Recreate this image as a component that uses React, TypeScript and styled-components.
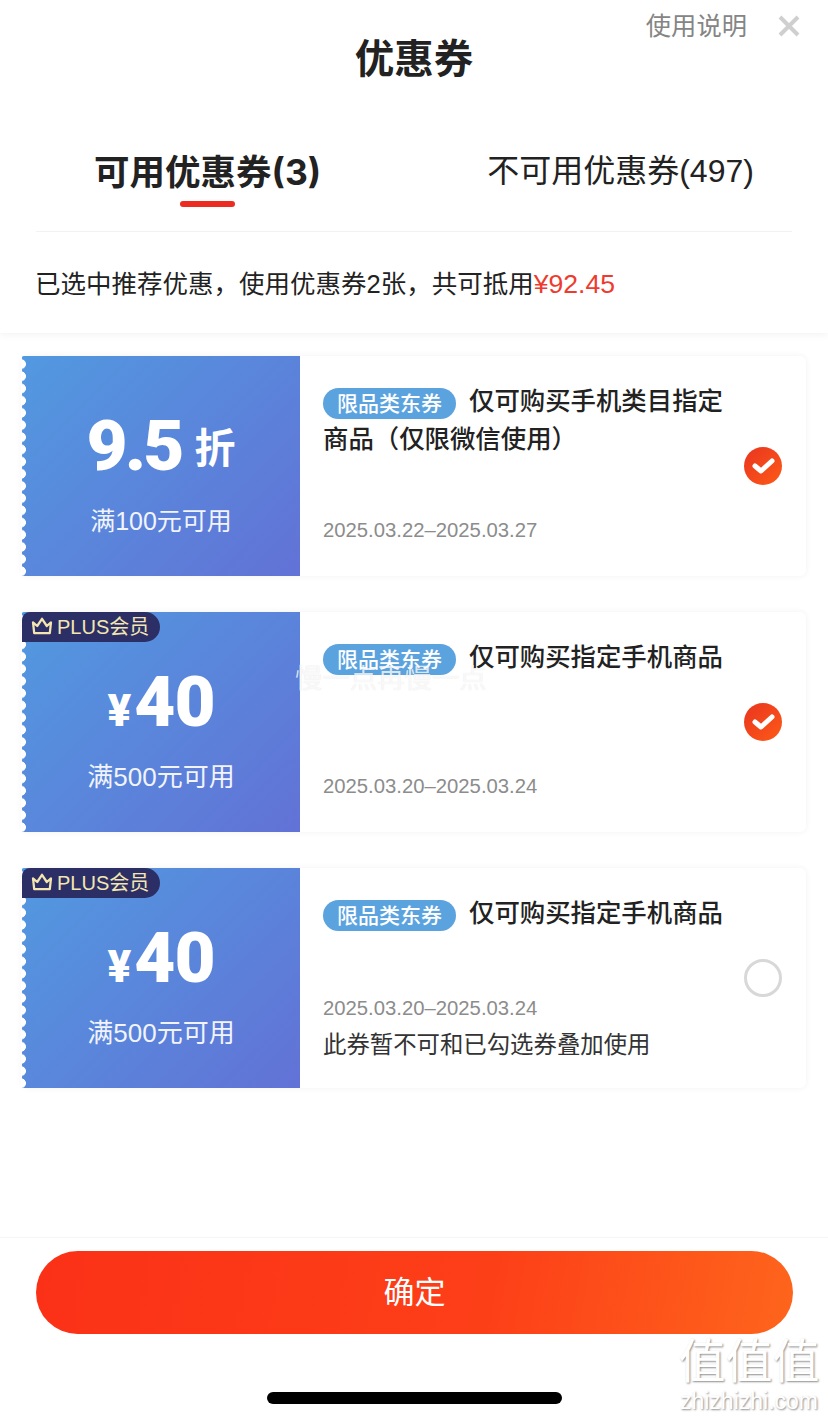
import React from "react";
import styled, { createGlobalStyle } from "styled-components";

const GlobalStyle = createGlobalStyle`
  html, body {
    margin: 0;
    padding: 0;
    background: #fff;
    font-family: "Liberation Sans", "Noto Sans CJK SC", sans-serif;
  }
  * { box-sizing: border-box; }
`;

const Page = styled.div`
  position: relative;
  width: 828px;
  height: 1420px;
  overflow: hidden;
  display: flex;
  flex-direction: column;
  background: #fff;
  color: #1d1d1f;
`;

const Head = styled.header`
  height: 333px;
  padding: 0 36px;
  flex-shrink: 0;
  background: #fff;
  box-shadow: 0 2px 8px rgba(0, 0, 0, 0.05);
`;

const TitleRow = styled.div`
  display: grid;
  grid-template-columns: 1fr auto 1fr;
  height: 134px;
`;

const Title = styled.h1`
  grid-column: 2;
  margin: 32px 0 0;
  font-size: 39.5px;
  line-height: 54px;
  font-weight: 700;
  color: #222;
`;

const Actions = styled.div`
  grid-column: 3;
  display: flex;
  justify-content: flex-end;
  align-items: center;
  gap: 31px;
  height: 26px;
  margin-top: 13px;
  margin-right: -8px;
`;

const Help = styled.span`
  font-size: 25.3px;
  line-height: 26px;
  color: #858585;
`;

const Tabs = styled.div`
  display: flex;
  align-items: flex-start;
  height: 98px;
  border-bottom: 1px solid #f2f2f2;
`;

const Tab = styled.div<{ $active?: boolean; $left: number }>`
  display: flex;
  flex-direction: column;
  align-items: center;
  margin-left: ${(p) => p.$left}px;
  font-family: ${(p) => (p.$active ? '"Inter", "Noto Sans CJK SC", sans-serif' : "inherit")};
  font-size: ${(p) => (p.$active ? 35.5 : 32)}px;
  font-weight: ${(p) => (p.$active ? 700 : 400)};
  line-height: ${(p) => (p.$active ? 50 : 44)}px;
  margin-top: ${(p) => (p.$active ? 14 : 15)}px;
  color: #222;
  white-space: nowrap;
`;

const TabLine = styled.div`
  width: 55px;
  height: 6px;
  margin-top: 3px;
  border-radius: 3px;
  background: #ec2c20;
`;

const Summary = styled.p`
  margin: 0 0 0 -1px;
  padding-top: 34px;
  font-size: 25.5px;
  line-height: 36px;
  color: #222;
  white-space: nowrap;
`;

const Red = styled.span`
  font-size: 26.6px;
  color: #ee3b2e;
`;

const List = styled.main`
  flex: 1;
  display: flex;
  flex-direction: column;
  gap: 36px;
  padding: 23px 22px 0;
`;

const Card = styled.section`
  display: flex;
  width: 784px;
  height: 220px;
  background: #fff;
  border-radius: 6px;
  box-shadow: 0 0 6px rgba(0, 0, 0, 0.06);
`;

const Stub = styled.div`
  position: relative;
  width: 278px;
  flex-shrink: 0;
  display: flex;
  flex-direction: column;
  align-items: center;
  color: #fff;
  background: linear-gradient(135deg, #5299e0 0%, #6272d6 100%);
  &::before {
    content: "";
    position: absolute;
    left: -1px;
    top: 0;
    bottom: 0;
    width: 6px;
    background: radial-gradient(circle at 0 50%, #fff 4.6px, transparent 5.2px) 0 2px / 6px 12.2px repeat-y;
  }
`;

const Badge = styled.div`
  position: absolute;
  left: 0;
  top: 0;
  z-index: 1;
  height: 30px;
  width: 138px;
  padding: 0 0 3px 9px;
  display: flex;
  align-items: center;
  gap: 4px;
  font-size: 20px;
  color: #f3e6b0;
  background: #2b2f66;
  border-radius: 8px 15px 15px 0;
  white-space: nowrap;
`;

const Value = styled.div`
  display: flex;
  align-items: baseline;
  margin-top: 52px;
  height: 76px;
  line-height: 76px;
`;

const Big = styled.span<{ $tight?: boolean }>`
  font-family: "Roboto", "Liberation Sans", sans-serif;
  font-size: 71px;
  font-weight: 900;
  letter-spacing: ${(p) => (p.$tight ? -3 : -1)}px;
`;

const Unit = styled.span`
  font-size: 41px;
  font-weight: 700;
  margin-left: 13px;
  position: relative;
  top: -7px;
`;

const Yen = styled.span`
  font-family: "Roboto", sans-serif;
  font-size: 44px;
  font-weight: 900;
  margin-right: 3px;
`;

const Cond = styled.div<{ $wide?: boolean }>`
  margin-top: 20px;
  font-size: ${(p) => (p.$wide ? 26 : 25)}px;
  line-height: 34px;
  color: #f1f4fc;
`;

const Body = styled.div`
  flex: 1;
  display: flex;
  align-items: center;
  padding: 0 24px 0 23px;
`;

const Info = styled.div`
  flex: 1;
  height: 100%;
  display: flex;
  flex-direction: column;
  padding-top: 26px;
`;

const Desc = styled.div`
  width: 412px;
  height: 84px;
  font-size: 25.4px;
  line-height: 38px;
  font-weight: 500;
  color: #222;
`;

const Tag = styled.span`
  display: inline-block;
  height: 31px;
  width: 133px;
  margin-right: 13px;
  border-radius: 16px;
  background: #5ba3df;
  color: #fff;
  font-size: 21px;
  line-height: 31px;
  font-weight: 500;
  text-align: center;
  vertical-align: -1px;
`;

const DateText = styled.div<{ $top: number }>`
  margin-top: ${(p) => p.$top}px;
  font-size: 20.3px;
  line-height: 28px;
  color: #8c8c8c;
`;

const Note = styled.div`
  margin-top: 6px;
  font-size: 23.4px;
  line-height: 34px;
  color: #333;
`;

const Check = styled.div<{ $on?: boolean }>`
  width: 38px;
  height: 38px;
  flex-shrink: 0;
  display: flex;
  align-items: center;
  justify-content: center;
  border-radius: 50%;
  background: ${(p) => (p.$on ? "linear-gradient(135deg, #e93420, #fd5a17)" : "#fff")};
  border: ${(p) => (p.$on ? "none" : "3px solid #d8d8d8")};
`;

const Foot = styled.footer`
  height: 183px;
  flex-shrink: 0;
  display: flex;
  flex-direction: column;
  align-items: center;
  padding-top: 13px;
  border-top: 1px solid #f5f5f5;
`;

const Confirm = styled.button`
  width: 757px;
  height: 83px;
  margin-left: 1px;
  padding: 0 0 6px;
  border: 0;
  border-radius: 42px;
  background: linear-gradient(100deg, #fb3117 0%, #fd3f18 60%, #fe651c 100%);
  color: #fff;
  font-family: inherit;
  font-size: 31px;
`;

const HomeBar = styled.div`
  width: 295px;
  height: 12px;
  margin-top: 58px;
  border-radius: 6px;
  background: #000;
`;

const Overlay = styled.div`
  position: absolute;
  left: 295px;
  top: 662px;
  font-size: 27.4px;
  line-height: 34px;
  color: rgba(255, 255, 255, 0.8);
  text-shadow: 0 0 1px rgba(0, 0, 0, 0.12);
  white-space: nowrap;
`;

const Mark = styled.div`
  position: absolute;
  right: 6px;
  top: 1335px;
  width: 146px;
  text-align: center;
  color: #fff;
  text-shadow: 1px 1px 2px rgba(0, 0, 0, 0.45);
`;

const MarkName = styled.div`
  font-size: 47px;
  line-height: 54px;
  white-space: nowrap;
`;

const MarkUrl = styled.div`
  font-size: 23px;
  line-height: 24px;
  white-space: nowrap;
`;

const Crown = () => (
  <svg width="22" height="18" viewBox="2 1 18 15" fill="none" stroke="#f3e6b0" strokeWidth="1.9" strokeLinejoin="round">
    <path d="M3.5 5.5 L7 8.5 L11 2.5 L15 8.5 L18.5 5.5 L17.5 14.5 H4.5 Z" />
  </svg>
);

const Tick = () => (
  <svg width="24" height="20" viewBox="0 0 24 20" fill="none" stroke="#fff" strokeWidth="5" strokeLinecap="round" strokeLinejoin="round">
    <path d="M4 10 L10 15 L21 5" />
  </svg>
);

const Close = () => (
  <svg width="22" height="22" viewBox="0 0 22 22" stroke="#cfcfcf" strokeWidth="4">
    <path d="M2 2 L20 20 M20 2 L2 20" />
  </svg>
);

type Coupon = {
  plus?: boolean;
  value: string;
  cond: string;
  desc: string;
  date: string;
  note?: string;
  on?: boolean;
};

const coupons: Coupon[] = [
  {
    value: "9.5",
    cond: "满100元可用",
    desc: "仅可购买手机类目指定商品（仅限微信使用）",
    date: "2025.03.22–2025.03.27",
    on: true,
  },
  {
    plus: true,
    value: "40",
    cond: "满500元可用",
    desc: "仅可购买指定手机商品",
    date: "2025.03.20–2025.03.24",
    on: true,
  },
  {
    plus: true,
    value: "40",
    cond: "满500元可用",
    desc: "仅可购买指定手机商品",
    date: "2025.03.20–2025.03.24",
    note: "此券暂不可和已勾选券叠加使用",
  },
];

function App() {
  return (
    <Page>
      <GlobalStyle />
      <Head>
        <TitleRow>
          <Title>优惠券</Title>
          <Actions>
            <Help>使用说明</Help>
            <Close />
          </Actions>
        </TitleRow>
        <Tabs>
          <Tab $active $left={58}>
            可用优惠券(3)
            <TabLine />
          </Tab>
          <Tab $left={166}>不可用优惠券(497)</Tab>
        </Tabs>
        <Summary>
          已选中推荐优惠，使用优惠券2张，共可抵用<Red>¥92.45</Red>
        </Summary>
      </Head>
      <List>
        {coupons.map((c, i) => (
          <Card key={i}>
            <Stub>
              {c.plus && (
                <Badge>
                  <Crown />
                  PLUS会员
                </Badge>
              )}
              <Value>
                {c.plus && <Yen>¥</Yen>}
                <Big $tight={!c.plus}>{c.value}</Big>
                {!c.plus && <Unit>折</Unit>}
              </Value>
              <Cond $wide={c.plus}>{c.cond}</Cond>
            </Stub>
            <Body>
              <Info>
                <Desc>
                  <Tag>限品类东券</Tag>
                  {c.desc}
                </Desc>
                <DateText $top={c.note ? 16 : 50}>{c.date}</DateText>
                {c.note && <Note>{c.note}</Note>}
              </Info>
              <Check $on={c.on}>{c.on && <Tick />}</Check>
            </Body>
          </Card>
        ))}
      </List>
      <Foot>
        <Confirm>确定</Confirm>
        <HomeBar />
      </Foot>
      <Overlay>慢一点再慢一点</Overlay>
      <Mark>
        <MarkName>值值值</MarkName>
        <MarkUrl>zhizhizhi.com</MarkUrl>
      </Mark>
    </Page>
  );
}

export default App;
